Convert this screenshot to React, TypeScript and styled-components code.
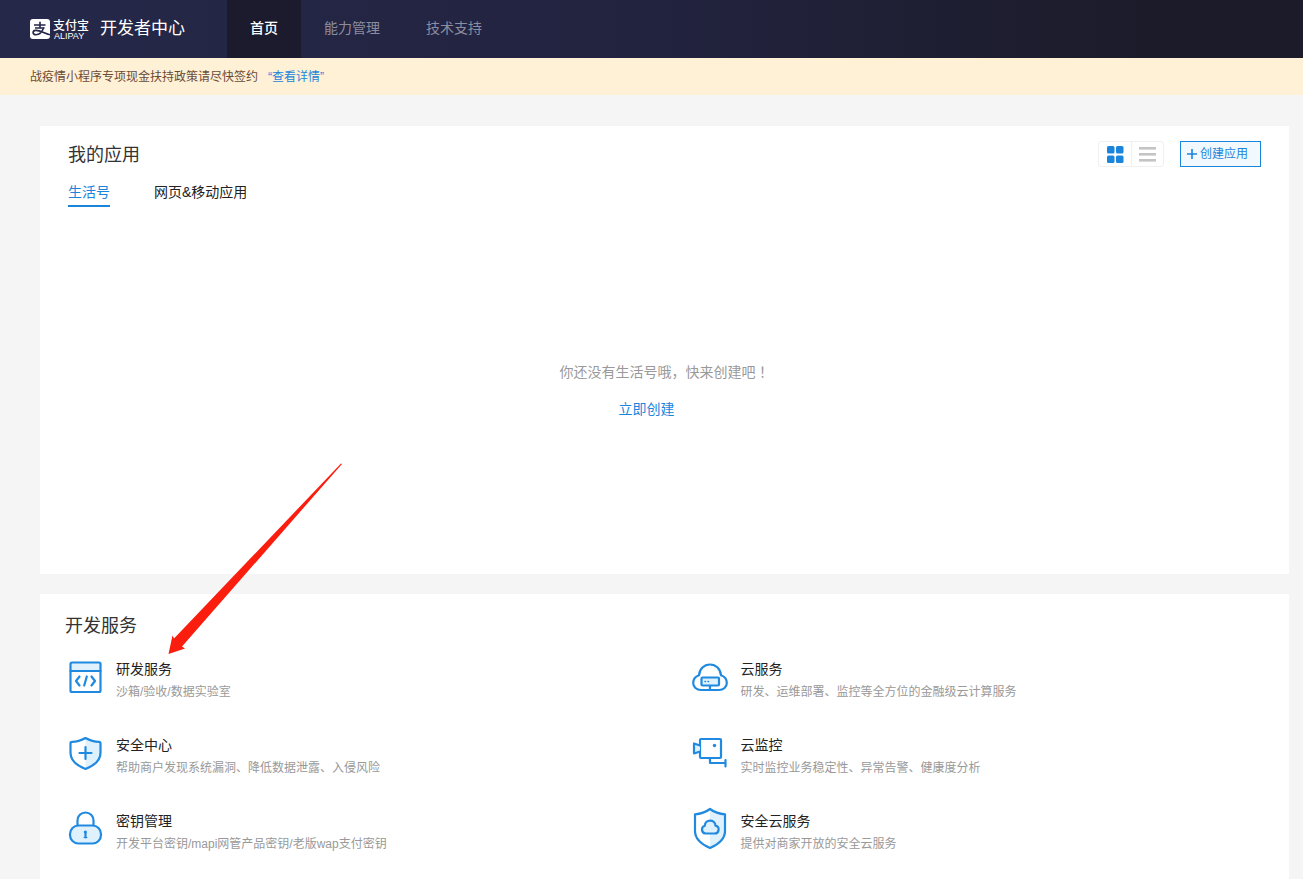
import React, { useState } from "react";
import styled, { createGlobalStyle } from "styled-components";

const BLUE = "#1b85dc";
const ICON = "#2089e0";
const TINT = "#dff1fd";

const GlobalStyle = createGlobalStyle`
  * { box-sizing: border-box; }
  body {
    margin: 0;
    background: #f5f5f5;
    color: #333;
    font-family: "Liberation Sans", "Noto Sans CJK SC", sans-serif;
    font-size: 14px;
    line-height: 20px;
  }
  a { color: inherit; text-decoration: none; }
  button { font: inherit; cursor: pointer; }
  h1, h2, h3, p, ul { margin: 0; padding: 0; font-weight: 400; }
  ul { list-style: none; }
`;

const Page = styled.div`
  min-height: 100vh;
  display: flex;
  flex-direction: column;
`;

const Header = styled.header`
  display: flex;
  height: 58px;
  background: linear-gradient(90deg, #252849 0%, #22233f 50%, #1c1b29 90%);
`;

const Brand = styled.a`
  display: flex;
  align-items: center;
  width: 227px;
  padding-left: 30px;
  color: #fff;
`;

const BrandWords = styled.span`
  display: flex;
  flex-direction: column;
  width: 36px;
  margin: 0 11px 0 3px;
`;

const BrandName = styled.span`
  font-size: 12px;
  line-height: 14px;
  font-weight: 500;
`;

const BrandLatin = styled.span`
  font-size: 9px;
  line-height: 7px;
  padding-left: 1px;
`;

const BrandTitle = styled.span`
  font-size: 17px;
  line-height: 24px;
`;

const Nav = styled.nav`
  display: flex;
`;

const NavLink = styled.a<{ $active?: boolean }>`
  display: flex;
  align-items: center;
  padding: 0 23px 2px;
  color: ${(p) => (p.$active ? "#fff" : "#8c8d9f")};
  background: ${(p) => (p.$active ? "#1b1b2d" : "transparent")};
  font-weight: ${(p) => (p.$active ? 500 : 400)};
`;

const Notice = styled.div`
  display: flex;
  align-items: center;
  gap: 10px;
  height: 37px;
  padding: 0 30px;
  background: #fff1d5;
  color: #6b4a35;
  font-size: 12px;
`;

const TextLink = styled.a`
  color: ${BLUE};
`;

const Main = styled.main`
  position: relative;
  flex: 1;
  display: flex;
  flex-direction: column;
  gap: 20px;
  padding: 31px 14px 0 40px;
`;

const AppsCard = styled.section`
  display: flex;
  flex-direction: column;
  min-height: 448px;
  padding: 15px 28px 2px;
  background: #fff;
`;

const ServicesCard = styled.section`
  flex: 1;
  padding: 18px 0 22px;
  background: #fff;
`;

const CardHead = styled.div<{ $inset?: boolean }>`
  display: flex;
  align-items: flex-start;
  justify-content: space-between;
  padding: ${(p) => (p.$inset ? "0 25px" : "0")};
`;

const CardTitle = styled.h2`
  font-size: 18px;
  line-height: 28px;
`;

const Tools = styled.div`
  display: flex;
  gap: 16px;
`;

const ViewSwitch = styled.div`
  display: flex;
  height: 26px;
  border: 1px solid #f0f0f0;
  border-radius: 3px;
`;

const ViewButton = styled.button<{ $active: boolean }>`
  display: flex;
  align-items: center;
  justify-content: center;
  width: 32px;
  padding: 0;
  border: 0;
  background: none;
  color: ${(p) => (p.$active ? BLUE : "#c4c4c4")};

  & + & {
    border-left: 1px solid #f0f0f0;
  }
`;

const CreateButton = styled.button`
  display: flex;
  align-items: center;
  gap: 3px;
  width: 81px;
  height: 26px;
  padding: 0 6px;
  border: 1px solid ${BLUE};
  background: #f1f8fe;
  color: ${BLUE};
  font-size: 12px;
`;

const Tabs = styled.div`
  display: flex;
  gap: 44px;
  margin-top: 13px;
`;

const Tab = styled.button<{ $active: boolean }>`
  height: 25px;
  padding: 0 0 3px;
  border: 0;
  border-bottom: 2px solid ${(p) => (p.$active ? BLUE : "transparent")};
  background: none;
  color: ${(p) => (p.$active ? BLUE : "#222")};
`;

const Empty = styled.div`
  flex: 1;
  display: flex;
  flex-direction: column;
  align-items: center;
  justify-content: center;
  gap: 17px;
  color: #999;

  a {
    margin-right: 36px;
  }
`;

const CenteredMark = styled.span`
  font-family: "Noto Sans CJK TC", sans-serif;
`;

const ServiceGrid = styled.ul`
  display: grid;
  grid-template-columns: 1fr 1fr;
  row-gap: 30px;
  margin-top: 17px;
`;

const ServiceLink = styled.a`
  display: flex;
  gap: 11px;
  padding-left: 25px;
`;

const IconBox = styled.span`
  flex: none;
  display: flex;
  align-items: center;
  justify-content: center;
  width: 40px;
  height: 40px;

  svg {
    flex: none;
  }
`;

const ServiceName = styled.h3`
  font-size: 14px;
  line-height: 24px;
  color: #222;
`;

const ServiceText = styled.p`
  font-size: 12px;
  line-height: 22px;
  color: #999;
`;

const Pointer = styled.svg`
  position: absolute;
  left: 168px;
  top: 368px;
  pointer-events: none;
`;

const LogoMark = () => (
  <svg width="20" height="20" viewBox="0 0 20 20" aria-hidden="true">
    <rect width="20" height="20" rx="3" fill="#fff" />
    <g fill="none" stroke="#242747" strokeLinecap="butt">
      <path d="M4 6H15.500M10 2.800V9M5 9H14.400" strokeWidth="1.600" />
      <path d="M13.800 8.500C12.500 12 9.800 15.700 6 15.700C2.200 15.700 2.200 11.700 5.600 11.400C9.300 11 13.800 14 20 15.800" strokeWidth="1.600" />
    </g>
  </svg>
);

const GridIcon = () => (
  <svg width="17" height="17" viewBox="0 0 17 17" fill="currentColor" aria-hidden="true">
    <rect width="7.500" height="7.500" rx="1.500" />
    <rect x="9" width="7.500" height="7.500" rx="1.500" />
    <rect y="9.500" width="7.500" height="7.500" rx="1.500" />
    <rect x="9" y="9.500" width="7.500" height="7.500" rx="1.500" />
  </svg>
);

const ListIcon = () => (
  <svg width="17" height="16" viewBox="0 0 17 16" fill="currentColor" aria-hidden="true">
    <rect y="1" width="17" height="2.600" />
    <rect y="7" width="17" height="2.600" />
    <rect y="13" width="17" height="2.600" />
  </svg>
);

const PlusIcon = () => (
  <svg width="10" height="10" viewBox="0 0 10 10" stroke="currentColor" strokeWidth="1.600" aria-hidden="true">
    <path d="M0 5H10M5 0V10" />
  </svg>
);

const Drawing = ({ children }: { children: React.ReactNode }) => (
  <svg
    width="40"
    height="44"
    viewBox="0 0 40 44"
    fill="none"
    stroke={ICON}
    strokeWidth="2.200"
    strokeLinecap="round"
    strokeLinejoin="round"
    aria-hidden="true"
  >
    {children}
  </svg>
);

const CodeIcon = () => (
  <Drawing>
    <path d="M5.500 15V8.500Q5.500 7 7 7H34Q35.500 7 35.500 8.500V15Z" fill={TINT} stroke="none" />
    <rect x="5.500" y="7.500" width="30" height="29.500" rx="1.500" />
    <path d="M5.500 16H35.500" />
    <path d="M14.500 21.500L11 26L14.500 30.500M26.500 21.500L30 26L26.500 30.500M21.800 21.500L19.200 30.500" />
  </Drawing>
);

const ShieldPlusIcon = () => (
  <Drawing>
    <path d="M20.500 7L35 10.500V23C35 29 28 34 20.500 37Z" fill={TINT} stroke="none" />
    <path d="M20.500 7C16 9.500 11 10.800 7 10.800Q5.500 10.800 5.500 12.500V21.500C5.500 29 11.500 34.500 20.500 38C29.500 34.500 35.500 29 35.500 21.500V12.500Q35.500 10.800 34 10.800C30 10.800 25 9.500 20.500 7Z" />
    <path d="M20.500 16V28M14.500 22H26.500" />
  </Drawing>
);

const LockIcon = () => (
  <Drawing>
    <path d="M12.500 19V13.500A8 8 0 0 1 28.500 13.500V19" />
    <rect x="5" y="18.500" width="31" height="18" rx="8.500" fill={TINT} />
    <path d="M20.500 25V30.500" />
    <path d="M19 30.500H22" strokeWidth="1" />
    <circle cx="20.300" cy="25" r="1.500" fill={ICON} stroke="none" />
  </Drawing>
);

const CloudServerIcon = () => (
  <Drawing>
    <path d="M11 35C6.500 35 3.200 32 3.200 28C3.200 24.500 5.500 21.500 9 20.300C9.500 14 14 9.500 20 9.500C26 9.500 30.500 14 31 20.300C34.500 21.500 36.800 24.500 36.800 28C36.800 32 33.500 35 29 35Z" />
    <rect x="11.500" y="22.500" width="17.500" height="8" rx="1" fill={TINT} />
    <path d="M20 31V35" />
    <path d="M15 26.500H15.500M18 26.500H18.500" strokeWidth="1.500" />
  </Drawing>
);

const CameraIcon = () => (
  <Drawing>
    <rect x="10" y="8" width="21" height="19" rx="1" />
    <path d="M10 14.500L4 12.500V22.500L10 20.500" fill={TINT} />
    <circle cx="24.500" cy="14.500" r="1.700" fill={ICON} stroke="none" />
    <path d="M20 27V32H34.500M35.500 29V35.500" />
  </Drawing>
);

const ShieldCloudIcon = () => (
  <Drawing>
    <path d="M20 3L34 8V25C34 32 28 37 20 41Z" fill={TINT} stroke="none" />
    <path d="M20 2C16 5 10 7 5 7.300V24C5 32 12 37.500 20 41C28 37.500 35 32 35 24V7.300C30 7 24 5 20 2Z" />
    <path d="M15.500 26.500A4 4 0 0 1 14.800 18.700C15 12 25 12 25.500 18.600A4 4 0 0 1 24.500 26.500Z" fill={TINT} />
  </Drawing>
);

const services = [
  { icon: CodeIcon, name: "研发服务", text: "沙箱/验收/数据实验室" },
  { icon: CloudServerIcon, name: "云服务", text: "研发、运维部署、监控等全方位的金融级云计算服务" },
  { icon: ShieldPlusIcon, name: "安全中心", text: "帮助商户发现系统漏洞、降低数据泄露、入侵风险" },
  { icon: CameraIcon, name: "云监控", text: "实时监控业务稳定性、异常告警、健康度分析" },
  { icon: LockIcon, name: "密钥管理", text: "开发平台密钥/mapi网管产品密钥/老版wap支付密钥" },
  { icon: ShieldCloudIcon, name: "安全云服务", text: "提供对商家开放的安全云服务" },
];

const tabs = ["生活号", "网页&移动应用"];

export default function App() {
  const [tab, setTab] = useState(0);
  const [view, setView] = useState<"grid" | "list">("grid");

  return (
    <Page>
      <GlobalStyle />
      <Header>
        <Brand href="#">
          <LogoMark />
          <BrandWords>
            <BrandName>支付宝</BrandName>
            <BrandLatin>ALIPAY</BrandLatin>
          </BrandWords>
          <BrandTitle>开发者中心</BrandTitle>
        </Brand>
        <Nav>
          <NavLink href="#" $active aria-current="page">首页</NavLink>
          <NavLink href="#">能力管理</NavLink>
          <NavLink href="#">技术支持</NavLink>
        </Nav>
      </Header>
      <Notice>
        <span>战疫情小程序专项现金扶持政策请尽快签约</span>
        <TextLink href="#">“查看详情”</TextLink>
      </Notice>
      <Main>
        <AppsCard>
          <CardHead>
            <CardTitle>我的应用</CardTitle>
            <Tools>
              <ViewSwitch>
                <ViewButton type="button" aria-label="grid" $active={view === "grid"} onClick={() => setView("grid")}>
                  <GridIcon />
                </ViewButton>
                <ViewButton type="button" aria-label="list" $active={view === "list"} onClick={() => setView("list")}>
                  <ListIcon />
                </ViewButton>
              </ViewSwitch>
              <CreateButton type="button">
                <PlusIcon />
                创建应用
              </CreateButton>
            </Tools>
          </CardHead>
          <Tabs role="tablist">
            {tabs.map((label, i) => (
              <Tab key={label} type="button" role="tab" aria-selected={tab === i} $active={tab === i} onClick={() => setTab(i)}>
                {label}
              </Tab>
            ))}
          </Tabs>
          <Empty>
            <p>
              你还没有生活号哦，快来创建吧<CenteredMark>！</CenteredMark>
            </p>
            <TextLink href="#">立即创建</TextLink>
          </Empty>
        </AppsCard>
        <ServicesCard>
          <CardHead $inset>
            <CardTitle>开发服务</CardTitle>
          </CardHead>
          <ServiceGrid>
            {services.map(({ icon: Icon, name, text }) => (
              <li key={name}>
                <ServiceLink href="#">
                  <IconBox>
                    <Icon />
                  </IconBox>
                  <div>
                    <ServiceName>{name}</ServiceName>
                    <ServiceText>{text}</ServiceText>
                  </div>
                </ServiceLink>
              </li>
            ))}
          </ServiceGrid>
        </ServicesCard>
        <Pointer width="175" height="192" viewBox="0 0 175 192" aria-hidden="true">
          <path d="M173 0.500L6 175.500L4.500 172.500L0.500 191L17 185.500L14 183.500L174 1Z" fill="#fb1d0e" />
        </Pointer>
      </Main>
    </Page>
  );
}
